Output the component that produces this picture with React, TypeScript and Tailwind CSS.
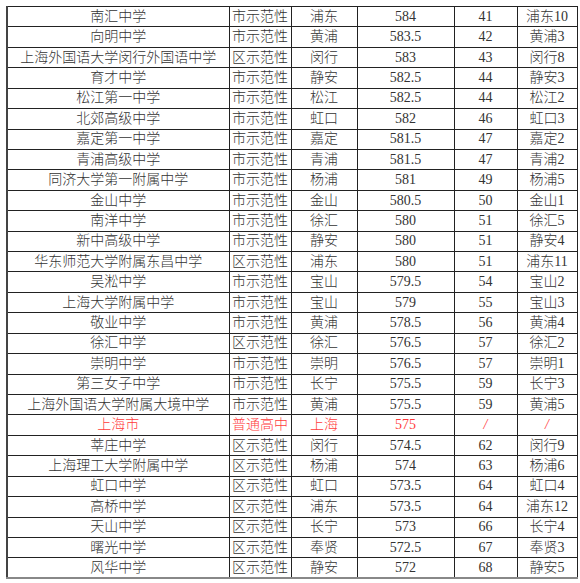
const rows: string[][] = [
  ["南汇中学", "市示范性", "浦东", "584", "41", "浦东10"],
  ["向明中学", "市示范性", "黄浦", "583.5", "42", "黄浦3"],
  ["上海外国语大学闵行外国语中学", "区示范性", "闵行", "583", "43", "闵行8"],
  ["育才中学", "市示范性", "静安", "582.5", "44", "静安3"],
  ["松江第一中学", "市示范性", "松江", "582.5", "44", "松江2"],
  ["北郊高级中学", "市示范性", "虹口", "582", "46", "虹口3"],
  ["嘉定第一中学", "市示范性", "嘉定", "581.5", "47", "嘉定2"],
  ["青浦高级中学", "市示范性", "青浦", "581.5", "47", "青浦2"],
  ["同济大学第一附属中学", "市示范性", "杨浦", "581", "49", "杨浦5"],
  ["金山中学", "市示范性", "金山", "580.5", "50", "金山1"],
  ["南洋中学", "市示范性", "徐汇", "580", "51", "徐汇5"],
  ["新中高级中学", "市示范性", "静安", "580", "51", "静安4"],
  ["华东师范大学附属东昌中学", "区示范性", "浦东", "580", "51", "浦东11"],
  ["吴淞中学", "市示范性", "宝山", "579.5", "54", "宝山2"],
  ["上海大学附属中学", "市示范性", "宝山", "579", "55", "宝山3"],
  ["敬业中学", "市示范性", "黄浦", "578.5", "56", "黄浦4"],
  ["徐汇中学", "区示范性", "徐汇", "576.5", "57", "徐汇2"],
  ["崇明中学", "市示范性", "崇明", "576.5", "57", "崇明1"],
  ["第三女子中学", "市示范性", "长宁", "575.5", "59", "长宁3"],
  ["上海外国语大学附属大境中学", "市示范性", "黄浦", "575.5", "59", "黄浦5"],
  ["上海市", "普通高中", "上海", "575", "/", "/"],
  ["莘庄中学", "区示范性", "闵行", "574.5", "62", "闵行9"],
  ["上海理工大学附属中学", "区示范性", "杨浦", "574", "63", "杨浦6"],
  ["虹口中学", "区示范性", "虹口", "573.5", "64", "虹口4"],
  ["高桥中学", "区示范性", "浦东", "573.5", "64", "浦东12"],
  ["天山中学", "区示范性", "长宁", "573", "66", "长宁4"],
  ["曙光中学", "区示范性", "奉贤", "572.5", "67", "奉贤3"],
  ["风华中学", "区示范性", "静安", "572", "68", "静安5"],
];

const widths = ["w-[222px]", "w-[62px]", "w-[66px]", "w-[97px]", "w-[63px]", "w-[60px]"];

export default function App() {
  return (
    <div className="w-[580px] h-[583px] bg-white pt-[6px] pl-[6px] overflow-hidden">
      <table
        className="table-fixed border-collapse text-[14px] leading-none font-light"
        style={{ fontFamily: '"Liberation Serif", "Noto Sans CJK SC", serif' }}
      >
        <colgroup>
          {widths.map((w, i) => (
            <col key={i} className={w} />
          ))}
        </colgroup>
        <tbody>
          {rows.map((r, i) => {
            const red = r[0] === "上海市";
            const last = i === rows.length - 1;
            return (
              <tr key={i} className="h-[20.43px]">
                {r.map((c, j) => (
                  <td
                    key={j}
                    className={`border border-[#222] p-0 text-center align-middle whitespace-nowrap ${
                      j === 0 ? "border-l-2 border-l-[#444]" : ""
                    } ${red ? "text-[#ff3b3b]" : "text-[#333]"} ${
                      last ? "border-b-2 border-b-[#888]" : ""
                    } ${red && j >= 4 ? "italic" : ""}`}
                  >
                    {c}
                  </td>
                ))}
              </tr>
            );
          })}
        </tbody>
      </table>
    </div>
  );
}
